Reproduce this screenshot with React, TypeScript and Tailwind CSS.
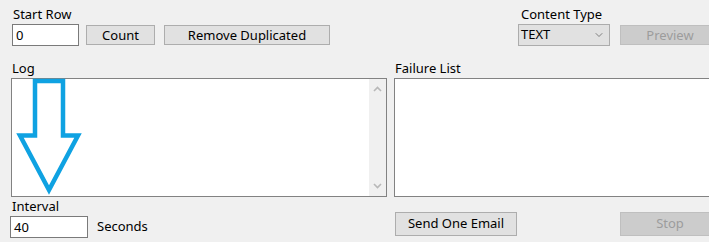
import { ChevronDown } from 'lucide-react';

const font = { fontFamily: '"Noto Sans", "Open Sans", sans-serif' };

function Btn({ label, width, disabled = false }: { label: string; width: string; disabled?: boolean }) {
  return (
    <button
      className={`h-[20px] shrink-0 border text-[13px] leading-none flex items-center justify-center ${width} ${
        disabled ? 'bg-[#cccccc] border-[#bfbfbf] text-[#9c9c9c]' : 'bg-[#e1e1e1] border-[#adadad] text-black'
      }`}
    >
      {label}
    </button>
  );
}

function Chevron({ up }: { up?: boolean }) {
  return (
    <svg width="9" height="6" viewBox="0 0 9 6" className="block">
      <polyline
        points={up ? '1,5 4.5,1.5 8,5' : '1,1 4.5,4.5 8,1'}
        fill="none"
        stroke="#b8b8b8"
        strokeWidth="1.6"
      />
    </svg>
  );
}

export default function App() {
  return (
    <div className="relative w-[709px] h-[242px] bg-[#f0f0f0] overflow-hidden text-black text-[13px]" style={font}>
      {/* Top controls */}
      <div className="flex pt-[6px]">
        <div className="pl-[12px] w-[518px] shrink-0">
          <div className="leading-[16px] pl-[1px]">Start Row</div>
          <div className="flex items-center mt-[2px]">
            <div className="w-[67px] h-[22px] bg-white border border-[#7a7a7a] leading-[20px] pl-[3px]">0</div>
            <div className="ml-[7px]">
              <Btn label="Count" width="w-[69px]" />
            </div>
            <div className="ml-[9px]">
              <Btn label="Remove Duplicated" width="w-[166px]" />
            </div>
          </div>
        </div>
        <div className="shrink-0">
          <div className="leading-[16px] pl-[3px]">Content Type</div>
          <div className="flex items-center mt-[2px]">
            <div className="w-[92px] h-[22px] bg-[#e1e1e1] border border-[#acacac] flex items-center justify-between pl-[2px] pr-[4px]">
              <span>TEXT</span>
              <ChevronDown size={12} strokeWidth={1.4} className="text-[#555]" />
            </div>
            <div className="ml-[10px]">
              <Btn label="Preview" width="w-[100px]" disabled />
            </div>
          </div>
        </div>
      </div>

      {/* Labels above lists */}
      <div className="flex mt-[14px] leading-[16px]">
        <div className="pl-[12px] w-[395px] shrink-0">Log</div>
        <div className="shrink-0">Failure List</div>
      </div>

      {/* Lists */}
      <div className="flex mt-[2px] pl-[11px]">
        <div className="w-[376px] h-[119px] shrink-0 bg-white border border-[#828282] flex justify-end">
          <div className="w-[17px] h-full bg-[#f0f0f0] flex flex-col items-center justify-between py-[7px]">
            <Chevron up />
            <Chevron />
          </div>
        </div>
        <div className="ml-[7px] w-[330px] h-[119px] shrink-0 bg-white border border-[#828282]" />
      </div>

      {/* Bottom row */}
      <div className="flex">
        <div className="pl-[10px] w-[385px] shrink-0">
          <div className="leading-[16px] pl-[2px] mt-[1px]">Interval</div>
          <div className="flex items-center mt-[2px]">
            <div className="w-[78px] h-[22px] bg-white border border-[#7a7a7a] leading-[20px] pl-[3px]">40</div>
            <span className="ml-[9px]">Seconds</span>
          </div>
        </div>
        <div className="mt-[15px] ml-[10px] flex shrink-0">
          <button className="w-[122px] h-[24px] shrink-0 bg-[#e1e1e1] border border-[#adadad]">Send One Email</button>
          <button className="ml-[103px] w-[100px] h-[24px] shrink-0 bg-[#cccccc] border border-[#bfbfbf] text-[#9c9c9c]">
            Stop
          </button>
        </div>
      </div>

      {/* Annotation arrow drawn over the log */}
      <svg className="absolute left-0 top-0 pointer-events-none" width="709" height="242">
        <polygon
          points="35,81 63,81 63,135.5 78,135.5 49,190 20,135.5 35,135.5"
          fill="none"
          stroke="#0fa2e2"
          strokeWidth="4.5"
          strokeLinejoin="miter"
        />
      </svg>
    </div>
  );
}
